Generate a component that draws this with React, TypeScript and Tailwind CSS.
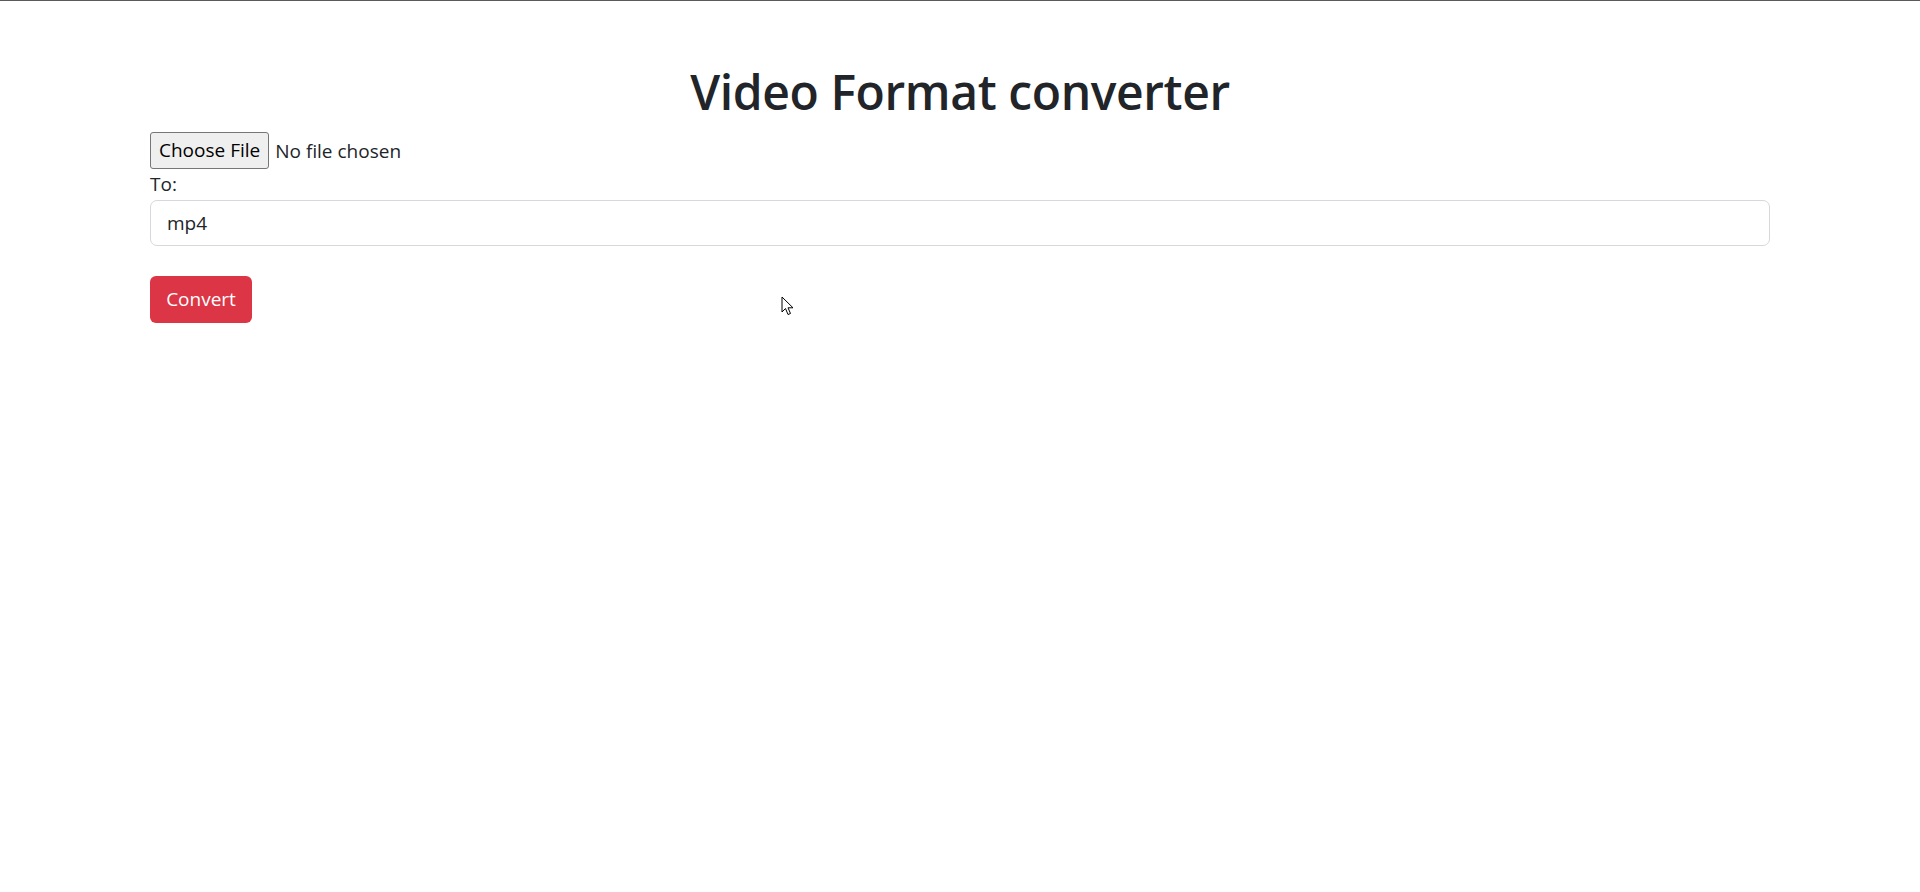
import React from "react";

export default function App() {
  return (
    <div
      className="relative min-h-[892px] w-full bg-white border-t border-[#5a5a5a] text-[#212529]"
      style={{ fontFamily: '"Open Sans", "Noto Sans", sans-serif' }}
    >
      <div className="mx-[150px] pt-[61px]">
        <h1 className="text-center text-[48px] font-semibold leading-[60px] tracking-[-0.4px]">
          Video Format converter
        </h1>
        <div className="mt-[10px] flex h-[37px] items-center">
          <button
            type="button"
            className="h-[37px] rounded-[3px] border border-[#767676] bg-[#efefef] px-[8px] text-[19px] leading-[35px] text-black"
          >
            Choose File
          </button>
          <span className="ml-[6px] text-[19px] leading-[30px]">No file chosen</span>
        </div>
        <label className="block h-[31px] text-[19px] leading-[31px]">To:</label>
        <div className="flex h-[46px] items-center rounded-[7px] border border-[#d5d8dc] bg-white px-[16px] text-[19px] text-[#212529]">
          mp4
        </div>
        <button
          type="button"
          className="mt-[30px] h-[47px] w-[102px] rounded-[6px] bg-[#dc3545] text-[19px] text-white"
        >
          Convert
        </button>
      </div>
      <svg
        className="absolute left-[781px] top-[295px]"
        width="14"
        height="21"
        viewBox="0 0 14 21"
      >
        <path
          d="M1 1 L1 16 L4.5 12.5 L7 18.5 L9.5 17.5 L7 11.8 L12 11.8 Z"
          fill="white"
          stroke="black"
          strokeWidth="1"
          strokeLinejoin="round"
        />
      </svg>
    </div>
  );
}
